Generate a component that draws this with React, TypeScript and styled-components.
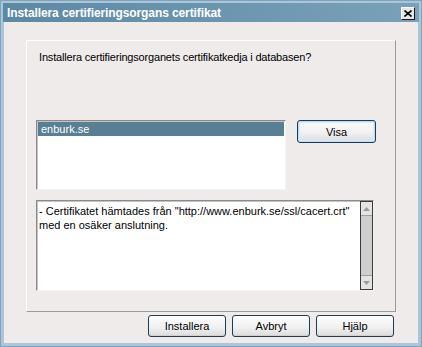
import styled, { createGlobalStyle } from "styled-components";

const GlobalStyle = createGlobalStyle`
  html, body {
    margin: 0;
    padding: 0;
    background: #efebeb;
  }
  body {
    font-family: "Liberation Sans", Arial, sans-serif;
    font-size: 11px;
    color: #000;
  }
`;

const Window = styled.div`
  width: 422px;
  height: 347px;
  box-sizing: border-box;
  display: flex;
  flex-direction: column;
  background: #a9c6da;
  border: 1px solid #7fa3bb;
  padding: 0 3px 3px 3px;
`;

const TitleBar = styled.div`
  height: 19px;
  margin: 2px -1px 0 -1px;
  padding: 0 4px 0 4px;
  display: flex;
  align-items: center;
  justify-content: space-between;
  background: linear-gradient(to right, #5d88a3, #6e97b1 60%, #7aa1b9);
`;

const Title = styled.span`
  color: #fff;
  font-weight: bold;
  font-size: 12px;
  letter-spacing: -0.1px;
`;

const CloseButton = styled.div`
  width: 14px;
  height: 13px;
  box-sizing: border-box;
  display: flex;
  align-items: center;
  justify-content: center;
  background: #e6e6e6;
  border-top: 1px solid #fff;
  border-left: 1px solid #fff;
  border-right: 1px solid #1a1a1a;
  border-bottom: 1px solid #1a1a1a;
  margin-top: 1px;
`;

const Client = styled.div`
  flex: 1;
  display: flex;
  flex-direction: column;
  background: #efebeb;
  padding: 18px 20px 0 22px;
`;

const Panel = styled.div`
  width: 370px;
  height: 272px;
  box-sizing: border-box;
  border-top: 1px solid #fff;
  border-left: 1px solid #fff;
  border-right: 1px solid #9a9a9a;
  border-bottom: 1px solid #9a9a9a;
  padding: 10px 0 0 9px;
  display: flex;
  flex-direction: column;
`;

const Question = styled.div`
  line-height: 13px;
  margin-left: 3px;
  letter-spacing: -0.18px;
`;

const ListRow = styled.div`
  display: flex;
  align-items: flex-start;
  gap: 11px;
  margin-top: 56px;
`;

const Sunken = styled.div<{ $w: number; $h: number }>`
  width: ${(p) => p.$w}px;
  height: ${(p) => p.$h}px;
  box-sizing: border-box;
  background: #fff;
  border-top: 1px solid #8a8a8a;
  border-left: 1px solid #8a8a8a;
  border-right: 1px solid #f4f4f4;
  border-bottom: 1px solid #f4f4f4;
  box-shadow: inset 1px 1px 0 #c4c4c4;
  display: flex;
`;

const ListItems = styled.div`
  flex: 1;
  padding: 1px;
`;

const ListItem = styled.div<{ $selected?: boolean }>`
  height: 14px;
  line-height: 14px;
  padding-left: 3px;
  background: ${(p) => (p.$selected ? "#587f94" : "transparent")};
  color: ${(p) => (p.$selected ? "#fff" : "#000")};
`;

const Button = styled.button<{ $default?: boolean }>`
  width: 79px;
  height: 23px;
  box-sizing: border-box;
  border: 1px solid #1d3b52;
  border-radius: 3px;
  font-family: "Liberation Sans", Arial, sans-serif;
  font-size: 11px;
  color: #000;
  padding: 0;
  background: linear-gradient(to bottom, #fdfdfd, #f1f1f1 55%, #dcdcdc);
  box-shadow: ${(p) =>
    p.$default
      ? "inset 0 0 0 1px #bcdcf4, inset 0 0 0 2px #d9ecfa"
      : "inset 0 -1px 0 #d0d0d0"};
`;

const TextArea = styled(Sunken)`
  margin-top: 10px;
`;

const TextBody = styled.div`
  flex: 1;
  padding: 3px 0 0 2px;
  line-height: 14px;
`;

const ScrollBar = styled.div`
  width: 13px;
  display: flex;
  flex-direction: column;
  border: 1px solid #3a3a3a;
  box-sizing: border-box;
  background: #c9c9c9;
`;

const Arrow = styled.div`
  height: 13px;
  display: flex;
  align-items: center;
  justify-content: center;
  background: #e4e4e4;
`;

const Track = styled.div`
  flex: 1;
  background: #cfcfcf;
  border-top: 1px solid #a0a0a0;
  border-bottom: 1px solid #a0a0a0;
`;

const Footer = styled.div`
  display: flex;
  justify-content: flex-end;
  gap: 6px;
  width: 368px;
  margin-top: 3px;
`;

const FooterButton = styled(Button)`
  width: 78px;
  height: 22px;
`;

const Tri = ({ up }: { up?: boolean }) => (
  <svg width="7" height="4" viewBox="0 0 7 4">
    <path d={up ? "M0 4 L3.5 0 L7 4 Z" : "M0 0 L3.5 4 L7 0 Z"} fill="#9a9a9a" />
  </svg>
);

export default function App() {
  return (
    <>
      <GlobalStyle />
      <Window>
        <TitleBar>
          <Title>Installera certifieringsorgans certifikat</Title>
          <CloseButton>
            <svg width="8" height="7" viewBox="0 0 8 7">
              <path d="M0.5 0.5 L7.5 6.5 M7.5 0.5 L0.5 6.5" stroke="#000" strokeWidth="1.6" />
            </svg>
          </CloseButton>
        </TitleBar>
        <Client>
          <Panel>
            <Question>Installera certifieringsorganets certifikatkedja i databasen?</Question>
            <ListRow>
              <Sunken $w={250} $h={70}>
                <ListItems>
                  <ListItem $selected>enburk.se</ListItem>
                </ListItems>
              </Sunken>
              <Button $default>Visa</Button>
            </ListRow>
            <TextArea $w={338} $h={91}>
              <TextBody>
                - Certifikatet hämtades från "http://www.enburk.se/ssl/cacert.crt"
                <br />
                med en osäker anslutning.
              </TextBody>
              <ScrollBar>
                <Arrow>
                  <Tri up />
                </Arrow>
                <Track />
                <Arrow>
                  <Tri />
                </Arrow>
              </ScrollBar>
            </TextArea>
          </Panel>
          <Footer>
            <FooterButton>Installera</FooterButton>
            <FooterButton>Avbryt</FooterButton>
            <FooterButton>Hjälp</FooterButton>
          </Footer>
        </Client>
      </Window>
    </>
  );
}
